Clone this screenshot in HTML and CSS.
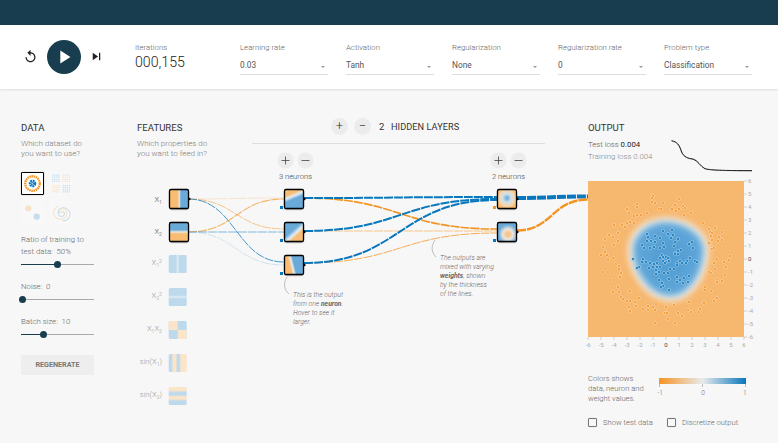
FILE: index.html
```html
<!DOCTYPE html>
<html>
<head>
<meta charset="utf-8">
<title>Neural network playground</title>
<link rel="stylesheet" href="styles.css">
</head>
<body>

<div class="topbar"></div>

<div class="toolbar">
  <div class="runcontrols">
    <svg class="icon" viewBox="0 0 24 24"><path d="M12 5V1L7 6l5 5V7c3.31 0 6 2.69 6 6s-2.69 6-6 6-6-2.69-6-6H4c0 4.42 3.58 8 8 8s8-3.58 8-8-3.58-8-8-8z"/></svg>
    <div class="playbutton"><svg viewBox="0 0 24 24"><path d="M8 5v14l11-7z"/></svg></div>
    <svg class="icon" viewBox="0 0 24 24"><path d="M6 18l8.5-6L6 6v12zM16 6v12h2V6h-2z"/></svg>
  </div>
  <div class="iterations">
    <div class="toollabel">Iterations</div>
    <div class="itercount">000,155</div>
  </div>
  <div class="dropdown"><div class="toollabel">Learning rate</div><div class="dropvalue">0.03</div></div>
  <div class="dropdown"><div class="toollabel">Activation</div><div class="dropvalue">Tanh</div></div>
  <div class="dropdown"><div class="toollabel">Regularization</div><div class="dropvalue">None</div></div>
  <div class="dropdown"><div class="toollabel">Regularization rate</div><div class="dropvalue">0</div></div>
  <div class="dropdown"><div class="toollabel">Problem type</div><div class="dropvalue">Classification</div></div>
</div>

<div class="main">

  <div class="datacol">
    <h4>DATA</h4>
    <p class="hint">Which dataset do<br>you want to use?</p>
    <div class="datasets">
      <div class="dataset selected">
        <svg viewBox="0 0 22 22">
          <circle cx="11" cy="11" r="7.6" fill="none" stroke="#f59322" stroke-width="2.4" stroke-dasharray="1.6 .7"/>
          <circle cx="11" cy="11" r="2.2" fill="none" stroke="#0877bd" stroke-width="3.6" stroke-dasharray="1.4 .5"/>
        </svg>
      </div>
      <div class="dataset">
        <svg viewBox="0 0 22 22" fill="none" stroke-width="1.2" stroke-dasharray="1.2 .8">
          <path d="M2 3h8M2 5h8M2 7h8M2 9h8M12 13h8M12 15h8M12 17h8M12 19h8" stroke="#0877bd"/>
          <path d="M12 3h8M12 5h8M12 7h8M12 9h8M2 13h8M2 15h8M2 17h8M2 19h8" stroke="#f59322"/>
        </svg>
      </div>
      <div class="dataset">
        <svg viewBox="0 0 22 22">
          <circle cx="7" cy="7" r="3" fill="#f59322"/>
          <circle cx="15" cy="15" r="3" fill="#0877bd"/>
        </svg>
      </div>
      <div class="dataset">
        <svg viewBox="0 0 22 22" fill="none" stroke-width="1">
          <path d="M11 11c2-2 4 1 2 3s-6 0-5-4 7-5 10-1 0 10-6 10" stroke="#0877bd"/>
          <path d="M11 11c-2 1-3-2-1-3s6-1 6 4-6 7-10 4-3-9 2-11" stroke="#f59322"/>
        </svg>
      </div>
    </div>

    <div class="control ratio">
      <div class="controllabel">Ratio of training to<br>test data:&nbsp; 50%</div>
      <div class="slider"><div class="sliderfill fill50"></div><div class="sliderthumb"></div></div>
    </div>
    <div class="control">
      <div class="controllabel">Noise:&nbsp; 0</div>
      <div class="slider"><div class="sliderfill fill0"></div><div class="sliderthumb"></div></div>
    </div>
    <div class="control">
      <div class="controllabel">Batch size:&nbsp; 10</div>
      <div class="slider"><div class="sliderfill fill30"></div><div class="sliderthumb"></div></div>
    </div>
    <div class="regenerate">REGENERATE</div>
  </div>

  <div class="centercol">
    <div class="centerhead">
      <div class="featurehead">
        <h4>FEATURES</h4>
        <p class="hint">Which properties do<br>you want to feed in?</p>
      </div>
      <div class="layerhead">
        <div class="layercontrols">
          <div class="roundbutton">+</div>
          <div class="roundbutton">&minus;</div>
          <span class="layercount">2</span>
          <span class="layertitle">HIDDEN LAYERS</span>
        </div>
        <div class="layerrule"></div>
      </div>
    </div>

    <svg class="network" viewBox="137 89 460 354">
      <defs>
        <linearGradient id="gx1"><stop offset=".42" stop-color="#f8bc72"/><stop offset=".52" stop-color="#e8e4dc"/><stop offset=".6" stop-color="#6aaad9"/></linearGradient>
        <linearGradient id="gx2" x2="0" y2="1"><stop offset=".38" stop-color="#6aaad9"/><stop offset=".5" stop-color="#ebe6dd"/><stop offset=".6" stop-color="#f8bc72"/></linearGradient>
        <linearGradient id="gn1" x1=".35" y1="0" x2=".6" y2=".6"><stop offset=".3" stop-color="#f8bc72"/><stop offset=".55" stop-color="#e3ecf2"/><stop offset=".8" stop-color="#6aaad9"/></linearGradient>
        <linearGradient id="gn2" x1=".75" y1=".85" x2=".3" y2=".35"><stop offset=".25" stop-color="#f8bc72"/><stop offset=".5" stop-color="#e3ecf2"/><stop offset=".8" stop-color="#6aaad9"/></linearGradient>
        <linearGradient id="gn3" x1=".2" y1=".6" x2=".6" y2=".5"><stop offset=".2" stop-color="#f8bc72"/><stop offset=".55" stop-color="#e3ecf2"/><stop offset=".8" stop-color="#6aaad9"/></linearGradient>
        <radialGradient id="gm1" cx=".5" cy=".45" r=".55"><stop offset=".12" stop-color="#7db4dc"/><stop offset=".4" stop-color="#cfe0ea"/><stop offset=".75" stop-color="#f6d6ae"/><stop offset="1" stop-color="#f8bc72"/></radialGradient>
        <radialGradient id="gm2" cx=".55" cy=".62" r=".6"><stop offset=".15" stop-color="#f8c58a"/><stop offset=".45" stop-color="#ece6dc"/><stop offset=".85" stop-color="#6aaad9"/></radialGradient>
        <linearGradient id="gsq1"><stop offset=".4" stop-color="#bddaec"/><stop offset=".5" stop-color="#e0ecf3"/><stop offset=".6" stop-color="#bddaec"/></linearGradient>
        <linearGradient id="gsq2" x2="0" y2="1"><stop offset=".4" stop-color="#bddaec"/><stop offset=".5" stop-color="#e0ecf3"/><stop offset=".6" stop-color="#bddaec"/></linearGradient>
        <linearGradient id="gsin1">
          <stop offset=".15" stop-color="#bddaec"/><stop offset=".25" stop-color="#fbe4c8"/><stop offset=".4" stop-color="#fbe4c8"/>
          <stop offset=".48" stop-color="#bddaec"/><stop offset=".58" stop-color="#bddaec"/><stop offset=".68" stop-color="#fbe4c8"/><stop offset="1" stop-color="#fbe4c8"/>
        </linearGradient>
        <linearGradient id="gsin2" x2="0" y2="1">
          <stop offset=".18" stop-color="#fbe4c8"/><stop offset=".32" stop-color="#bddaec"/><stop offset=".44" stop-color="#bddaec"/>
          <stop offset=".54" stop-color="#fbe4c8"/><stop offset=".66" stop-color="#fbe4c8"/><stop offset=".78" stop-color="#bddaec"/><stop offset="1" stop-color="#bddaec"/>
        </linearGradient>
        <filter id="nodeshadow" x="-20%" y="-20%" width="140%" height="140%"><feDropShadow dx="0" dy=".6" stdDeviation=".6" flood-opacity=".35"/></filter>
      </defs>

      <!-- links: features to first layer -->
      <g fill="none" class="links">
        <path d="M188 199C236 199 236 198 284 198" stroke="#f59322" stroke-width=".8" opacity=".25"/>
        <path d="M188 199C236 199 236 229 284 229" stroke="#f59322" stroke-width="1" opacity=".5"/>
        <path d="M188 199C236 199 236 262 284 262" stroke="#0877bd" stroke-width="1" opacity=".75"/>
        <path d="M188 232C236 232 236 199 284 199" stroke="#f59322" stroke-width="1.1" opacity=".65"/>
        <path d="M188 232C236 232 236 232 284 232" stroke="#0877bd" stroke-width="1" opacity=".5"/>
        <path d="M188 232C236 232 236 265 284 265" stroke="#0877bd" stroke-width=".8" opacity=".2"/>

        <path d="M304 198C400 198 400 229 497 229" stroke="#f59322" stroke-width="1.6"/>
        <path d="M304 231C400 231 400 231 497 231" stroke="#f59322" stroke-width="1" opacity=".5"/>
        <path d="M304 263C400 263 400 233 497 233" stroke="#f59322" stroke-width="1" opacity=".75"/>
        <path d="M304 198C400 198 400 197 497 197" stroke="#0877bd" stroke-width="2"/>
        <path d="M304 231C400 231 400 199 497 199" stroke="#0877bd" stroke-width="2"/>
        <path d="M304 263C400 263 400 200 497 200" stroke="#0877bd" stroke-width="2"/>

        <path d="M517 198C552 198 552 196.500 588 196.500" stroke="#0877bd" stroke-width="4"/>
        <path d="M517 230.500C552 230.500 552 199.500 588 199.500" stroke="#f59322" stroke-width="2.400"/>
      </g>

      <!-- feature nodes -->
      <g class="nodelabels">
        <text x="162" y="202">X<tspan class="sub" dy="2">1</tspan></text>
        <text x="162" y="234">X<tspan class="sub" dy="2">2</tspan></text>
        <text class="off" x="162" y="265">X<tspan class="sub" dy="2">1</tspan><tspan class="sub" dy="-4">2</tspan></text>
        <text class="off" x="162" y="298">X<tspan class="sub" dy="2">2</tspan><tspan class="sub" dy="-4">2</tspan></text>
        <text class="off" x="162" y="331">X<tspan class="sub" dy="2">1</tspan><tspan dy="-2">X</tspan><tspan class="sub" dy="2">2</tspan></text>
        <text class="off" x="162" y="364">sin(X<tspan class="sub" dy="2">1</tspan><tspan dy="-2">)</tspan></text>
        <text class="off" x="162" y="397">sin(X<tspan class="sub" dy="2">2</tspan><tspan dy="-2">)</tspan></text>
      </g>

      <g class="activenode">
        <rect x="169.500" y="189.500" width="19" height="19" rx="1.500" fill="url(#gx1)"/>
        <rect x="169.500" y="222.500" width="19" height="19" rx="1.500" fill="url(#gx2)"/>
        <rect x="284.500" y="189.500" width="19" height="19" rx="1.500" fill="url(#gn1)"/>
        <rect x="284.500" y="222.500" width="19" height="19" rx="1.500" fill="url(#gn2)"/>
        <rect x="284.500" y="255.500" width="19" height="19" rx="1.500" fill="url(#gn3)"/>
        <rect x="497.500" y="189.500" width="19" height="19" rx="1.500" fill="url(#gm1)"/>
        <rect x="497.500" y="222.500" width="19" height="19" rx="1.500" fill="url(#gm2)"/>
      </g>

      <!-- activation arrows and bias squares -->
      <g fill="#000">
        <path d="M188.500 197l2.500 2-2.500 2zM303.500 197l2.500 2-2.500 2zM303.500 230l2.500 2-2.500 2zM303.500 263l2.500 2-2.500 2zM516.500 197l2.500 2-2.500 2zM516.500 230l2.500 2-2.500 2z"/>
      </g>
      <rect x="280" y="206" width="3" height="3" fill="#0877bd"/>
      <rect x="280" y="239" width="3" height="3" fill="#0877bd"/>
      <rect x="280" y="272" width="3" height="3" fill="#0877bd"/>
      <rect x="493" y="206" width="3" height="3" fill="#f59322"/>
      <rect x="493" y="239" width="3" height="3" fill="#0877bd"/>

      <rect x="168.700" y="255" width="18" height="18" rx="1.500" fill="url(#gsq1)"/>
      <rect x="168.700" y="288" width="18" height="18" rx="1.500" fill="url(#gsq2)"/>
      <g>
        <rect x="168.700" y="321" width="18" height="18" rx="1.500" fill="#bddaec"/>
        <path d="M168.700 321h9v9h-9zM177.700 330h9v9h-9z" fill="#fbe4c8"/>
      </g>
      <rect x="168.700" y="354" width="18" height="18" rx="1.500" fill="url(#gsin1)"/>
      <rect x="168.700" y="387" width="18" height="18" rx="1.500" fill="url(#gsin2)"/>

      <!-- per layer neuron buttons -->
      <g class="neuronbuttons">
        <circle cx="285.500" cy="160.500" r="8"/><circle cx="305.500" cy="160.500" r="8"/>
        <circle cx="498.500" cy="160.500" r="8"/><circle cx="518.500" cy="160.500" r="8"/>
        <path d="M281.500 160.500h8M285.500 156.500v8M301.500 160.500h8M494.500 160.500h8M498.500 156.500v8M514.500 160.500h8"/>
      </g>
      <text class="neuroncount" x="295.500" y="179">3 neurons</text>
      <text class="neuroncount" x="508.500" y="179">2 neurons</text>

      <!-- callouts -->
      <g fill="none" stroke="#999" stroke-width=".6">
        <path d="M287 277C283 283 284 290 289 294"/>
        <path d="M435 240C431 246 431 252 436 257"/>
      </g>
      <text class="callout">
        <tspan x="293" y="296.500">This is the output</tspan>
        <tspan x="293" y="306">from one <tspan class="calloutbold">neuron</tspan>.</tspan>
        <tspan x="293" y="315">Hover to see it</tspan>
        <tspan x="293" y="324">larger.</tspan>
      </text>
      <text class="callout">
        <tspan x="440" y="260">The outputs are</tspan>
        <tspan x="440" y="269">mixed with varying</tspan>
        <tspan x="440" y="278"><tspan class="calloutbold">weights</tspan>, shown</tspan>
        <tspan x="440" y="287">by the thickness</tspan>
        <tspan x="440" y="296">of the lines.</tspan>
      </text>
    </svg>
  </div>

  <div class="outputcol">
    <h4>OUTPUT</h4>
    <div class="lossrow">
      <div class="losstext">
        <div class="testloss">Test loss <b>0.004</b></div>
        <div class="trainloss">Training loss 0.004</div>
      </div>
      <svg class="losschart" viewBox="671 140 82 33">
        <path d="M671.500 140.700C677 142 679 144 681.700 153C684 158 690 159 695 159.500C698 160.500 700 166 705 168.500C711 170.500 730 170.800 752 171" fill="none" stroke="#aaa" stroke-width="1"/>
        <path d="M671.500 140.700C677 142 679 144 681.700 152C684 157 688 158.500 693 159C698 161 700 166 705 168.800C711 170.500 730 170.600 752 170.600" fill="none" stroke="#222" stroke-width="1"/>
      </svg>
    </div>

    <svg class="heatmap" id="heatmap" viewBox="0 0 172 172">
      <defs>
        <filter id="blur1" x="-30%" y="-30%" width="160%" height="160%"><feGaussianBlur stdDeviation="3.500"/></filter>
        <filter id="blur2" x="-30%" y="-30%" width="160%" height="160%"><feGaussianBlur stdDeviation="5"/></filter>
      </defs>
      <rect width="156" height="156" fill="#f6b76f"/>
      <path d="M80 37C100 38 118 50 120 66C121 80 116 102 98 115C84 124 68 119 57 108C44 94 39 78 41 64C44 48 60 36 80 37Z" fill="#fff" opacity=".9" filter="url(#blur1)"/>
      <path d="M80 41C98 42 114 53 116 67C116 80 112 99 96 111C84 119 70 115 60 105C48 92 44 78 45 65C48 51 62 40 80 41Z" fill="#5da5d8" filter="url(#blur1)"/>
      <path d="M78 58C92 58 100 66 100 78C98 92 88 102 78 100C66 97 60 86 62 74C64 64 70 58 78 58Z" fill="#3f90c8" opacity=".3" filter="url(#blur2)"/>
      <g id="points"></g>
      <g id="axes"></g>
    </svg>

    <div class="legendrow">
      <div class="legendtext">Colors shows<br>data, neuron and<br>weight values.</div>
      <div class="legendscale">
        <div class="legendbar"></div>
        <div class="legendmarks"><i></i><i></i><i></i></div>
        <div class="legendticks"><span>-1</span><span>0</span><span>1</span></div>
      </div>
    </div>

    <div class="checkrow">
      <label class="checkitem"><span class="checkbox"></span>Show test data</label>
      <label class="checkitem"><span class="checkbox"></span>Discretize output</label>
    </div>
  </div>

</div>

<script src="heatmap.js"></script>
</body>
</html>
```

FILE: styles.css
```css
html, body { margin: 0; padding: 0; height: 100%; overflow: hidden; }
body { background: #f7f7f7; font-family: Roboto, "Liberation Sans", sans-serif; color: #777; width: 778px; height: 443px; }

h4 { margin: 0; font-weight: 400; font-size: 9.6px; line-height: 12px; color: #333; }
.hint { margin: 5px 0 0; font-size: 8px; font-weight: 300; line-height: 10.300px; color: #777; white-space: nowrap; }

.topbar { height: 24.500px; background: #183d4e; box-shadow: 0 1px 1px rgba(0,0,0,.3); position: relative; }

.toolbar { height: 64px; background: #fff; display: flex; align-items: flex-start; box-shadow: 0 1px 2px rgba(0,0,0,.1); position: relative; }
.runcontrols { display: flex; align-items: center; width: 135px; height: 64px; padding-left: 23px; box-sizing: border-box; }
.icon { width: 15px; height: 15px; fill: #222; }
.playbutton { width: 34px; height: 34px; border-radius: 50%; background: #183d4e; margin: 0 8px 0 8.500px; display: flex; align-items: center; justify-content: center; }
.playbutton svg { width: 22px; height: 22px; fill: #fff; }

.iterations { width: 105px; padding-top: 18px; }
.toollabel { font-size: 7.800px; font-weight: 300; line-height: 10px; color: #666; white-space: nowrap; }
.itercount { font-size: 14.200px; font-weight: 300; line-height: 17px; color: #222; margin-top: 1px; }

.dropdown { width: 88px; margin-right: 18px; padding-top: 18px; }
.dropdown:last-child { margin-right: 0; }
.dropvalue { position: relative; font-size: 8.300px; line-height: 12px; height: 15px; margin-top: 6px; color: #555; border-bottom: 1px solid #ddd; }
.dropvalue::after { content: ""; position: absolute; right: 3px; top: 7px; border: 2px solid transparent; border-top: 2.500px solid #999; border-bottom: 0; }

.main { display: flex; padding-left: 21px; padding-top: 33px; height: 321px; }

.datacol { width: 73px; margin-right: 43px; }
.datasets { display: grid; grid-template-columns: 23px 23px; grid-auto-rows: 23px; gap: 6px; margin-top: 13px; }
.dataset { box-sizing: border-box; background: #fff; opacity: .2; border-radius: 1px; }
.dataset svg { display: block; width: 100%; height: 100%; }
.dataset.selected { opacity: 1; border: 1.500px solid #000; box-shadow: 0 0 1px rgba(0,0,0,.5); }

.control { margin-top: 16px; }
.control.ratio { margin-top: 10px; }
.controllabel { font-size: 7.800px; font-weight: 300; line-height: 12px; color: #666; white-space: nowrap; }
.slider { position: relative; height: 1px; background: #aaa; margin-top: 6px; }
.sliderfill { height: 100%; background: #183d4e; }
.fill50 { width: 50%; }
.fill0 { width: 0; }
.fill30 { width: 31%; }
.sliderthumb { width: 7px; height: 7px; border-radius: 50%; background: #183d4e; position: absolute; top: -3px; margin-left: -3.500px; }
.fill50 + .sliderthumb { left: 50%; }
.fill0 + .sliderthumb { left: 1px; }
.fill30 + .sliderthumb { left: 31%; }

.regenerate { margin-top: 20px; height: 20px; line-height: 20px; background: #eee; text-align: center; font-size: 7.200px; font-weight: 700; color: #777; }

.centercol { position: relative; width: 451px; }
.centerhead { display: flex; }
.featurehead { width: 115px; }
.layerhead { width: 293px; }
.layercontrols { display: flex; align-items: center; height: 18px; margin-top: -4px; padding-left: 79px; }
.roundbutton { width: 17px; height: 17px; border-radius: 50%; background: #ececec; color: #333; text-align: center; line-height: 16px; font-size: 13px; font-weight: 300; margin-right: 6px; flex: none; }
.layercount { font-size: 9.500px; color: #333; margin-left: 2px; width: 12px; }
.layertitle { font-size: 9.200px; color: #333; letter-spacing: .05px; white-space: nowrap; }
.layerrule { height: 1px; background: #ddd; margin-top: 7px; }

.network { position: absolute; left: 0; top: -33px; width: 460px; height: 354px; pointer-events: none; overflow: visible; }
.nodelabels text { font-size: 7.600px; font-weight: 300; fill: #555; text-anchor: end; }
.nodelabels text.off { fill: #999; }
.nodelabels .sub { font-size: 5.200px; }
.links path { stroke-dasharray: 9 1; }
.activenode rect { stroke: #000; stroke-width: 1.300px; filter: url(#nodeshadow); }
.neuronbuttons circle { fill: #ececec; stroke: none; }
.neuronbuttons path { stroke: #444; stroke-width: .8px; fill: none; }
.neuroncount { font-size: 7.600px; font-weight: 300; fill: #444; text-anchor: middle; }
.callout { font-size: 6.800px; font-weight: 300; font-style: italic; fill: #666; }
.calloutbold { font-weight: 700; fill: #666; }

.outputcol { width: 172px; }
.lossrow { display: flex; justify-content: space-between; height: 42px; margin-top: 5px; }
.losstext { font-size: 7.800px; line-height: 12px; font-weight: 300; }
.testloss { color: #555; }
.testloss b { color: #222; font-weight: 400; }
.trainloss { color: #888; }
.losschart { width: 82px; height: 33px; margin-right: 7px; margin-top: 1px; }

.heatmap { display: block; width: 172px; height: 172px; overflow: visible; }
.tickmark { stroke: #bbb; stroke-width: .6px; }
.ticklabel { font-size: 6px; fill: #aaa; }
.ticklabel.zero { fill: #444; }

.legendrow { display: flex; margin-top: 21px; }
.legendtext { width: 70.500px; font-size: 7.600px; font-weight: 300; line-height: 10.300px; color: #666; white-space: nowrap; }
.legendscale { width: 87px; padding-top: 4px; }
.legendbar { height: 6px; background: linear-gradient(to right, #f59322, #e8eaeb 50%, #0877bd); }
.legendmarks { display: flex; justify-content: space-between; height: 3px; }
.legendmarks i { width: 1px; background: #bbb; }
.legendticks { display: flex; justify-content: space-between; font-size: 6.500px; font-weight: 300; line-height: 8px; color: #666; margin: 2px -1px 0 -1px; }

.checkrow { display: flex; margin-top: 14px; }
.checkitem { display: flex; align-items: center; font-size: 7.600px; font-weight: 300; color: #666; width: 79px; white-space: nowrap; }
.checkbox { width: 7px; height: 7px; border: 1px solid #777; border-radius: 1px; margin-right: 6px; flex: none; box-shadow: 0 0 1px rgba(0,0,0,.3); }
```

FILE: heatmap.js
```js
// data points on the output heatmap, read in page pixels minus heatmap origin
var NS = "http://www.w3.org/2000/svg";

var orange = [[21,54],[25,56],[30,52],[17,58],[30,60],[26,64],[15,66],[17,71],[13,74],[19,74],[25,77],[20,79],[28,83],[31,85],[31,88],[33,92],[15,91],[32,96],[26,99],[30,106],[25,111],[31,111],[42,110],[33,116],[35,118],[39,120],[42,120],[47,121],[51,117],[41,126],[48,125],[42,130],[55,128],[60,125],[60,129],[65,126],[67,129],[68,123],[78,126],[77,132],[79,132],[80,138],[67,142],[87,142],[86,124],[101,121],[90,132],[94,135],[100,129],[103,131],[112,128],[111,131],[116,122],[126,120],[129,117],[117,106],[117,109],[123,110],[129,99],[129,101],[134,100],[137,94],[123,92],[121,91],[127,88],[126,82],[129,78],[136,81],[141,79],[142,75],[138,86],[121,62],[124,68],[126,67],[124,59],[123,55],[130,60],[134,59],[134,51],[122,51],
  [65,15],[64,17],[64,21],[67,22],[75,22],[91,18],[84,28],[87,24],[88,30],[91,28],[95,25],[97,27],[103,32],[96,34],[71,28],[73,28],[59,32],[49,23],[49,26],[49,34],[53,34],[46,35],[41,32],[39,28],[26,44],[34,44],[37,46],[39,42],[42,41],[46,42],[115,42],[121,48],[127,47],[124,52],[131,56]];

var blue = [[59,53],[60,56],[67,55],[59,60],[63,60],[67,61],[72,57],[75,50],[80,53],[85,54],[90,58],[83,57],[87,61],[86,65],[75,62],[76,66],[54,64],[56,67],[62,67],[66,66],[72,67],[101,63],[104,61],[105,67],[93,69],[90,70],[87,72],[90,73],[87,73],[45,78],[55,78],[54,81],[58,81],[62,82],[61,87],[51,86],[49,87],[66,83],[69,82],[74,74],[72,77],[75,76],[78,76],[80,77],[75,80],[78,81],[81,80],[69,86],[72,86],[68,89],[71,91],[68,93],[77,82],[82,88],[86,88],[80,92],[76,92],[89,82],[92,80],[94,82],[99,80],[98,82],[102,77],[107,80],[109,81],[89,84],[89,96],[92,99],[89,101],[96,97],[100,101],[95,102],[101,95],[81,98],[74,102],[75,105],[73,106],[71,99],[81,109],[65,86],[84,49]];

function circle(parent, x, y, r, fill) {
    var c = document.createElementNS(NS, "circle");
    c.setAttribute("cx", x);
    c.setAttribute("cy", y);
    c.setAttribute("r", r);
    c.setAttribute("fill", fill);
    c.setAttribute("stroke", "#fff");
    c.setAttribute("stroke-opacity", "0.65");
    c.setAttribute("stroke-width", "0.6");
    parent.appendChild(c);
}

function drawaxes(parent) {
    for (var i = -6; i <= 6; i++) {
        var p = 78 + i * 13;
        var h = document.createElementNS(NS, "path");
        h.setAttribute("class", "tickmark");
        h.setAttribute("d", "M156 " + p + "h3M" + p + " 156v3");
        parent.appendChild(h);

        var ty = document.createElementNS(NS, "text");
        ty.setAttribute("class", "ticklabel" + (i == 0 ? " zero" : ""));
        ty.setAttribute("x", 160);
        ty.setAttribute("y", p + 2);
        ty.textContent = -i;
        parent.appendChild(ty);

        var tx = document.createElementNS(NS, "text");
        tx.setAttribute("class", "ticklabel" + (i == 0 ? " zero" : ""));
        tx.setAttribute("x", p);
        tx.setAttribute("y", 166);
        tx.setAttribute("text-anchor", "middle");
        tx.textContent = i;
        parent.appendChild(tx);
    }
}

var pointsgroup = document.getElementById("points");
orange.forEach(function(p) { circle(pointsgroup, p[0], p[1], 1.5, "#f59322"); });
blue.forEach(function(p) { circle(pointsgroup, p[0], p[1], 1.5, "#0877bd"); });
drawaxes(document.getElementById("axes"));
```
